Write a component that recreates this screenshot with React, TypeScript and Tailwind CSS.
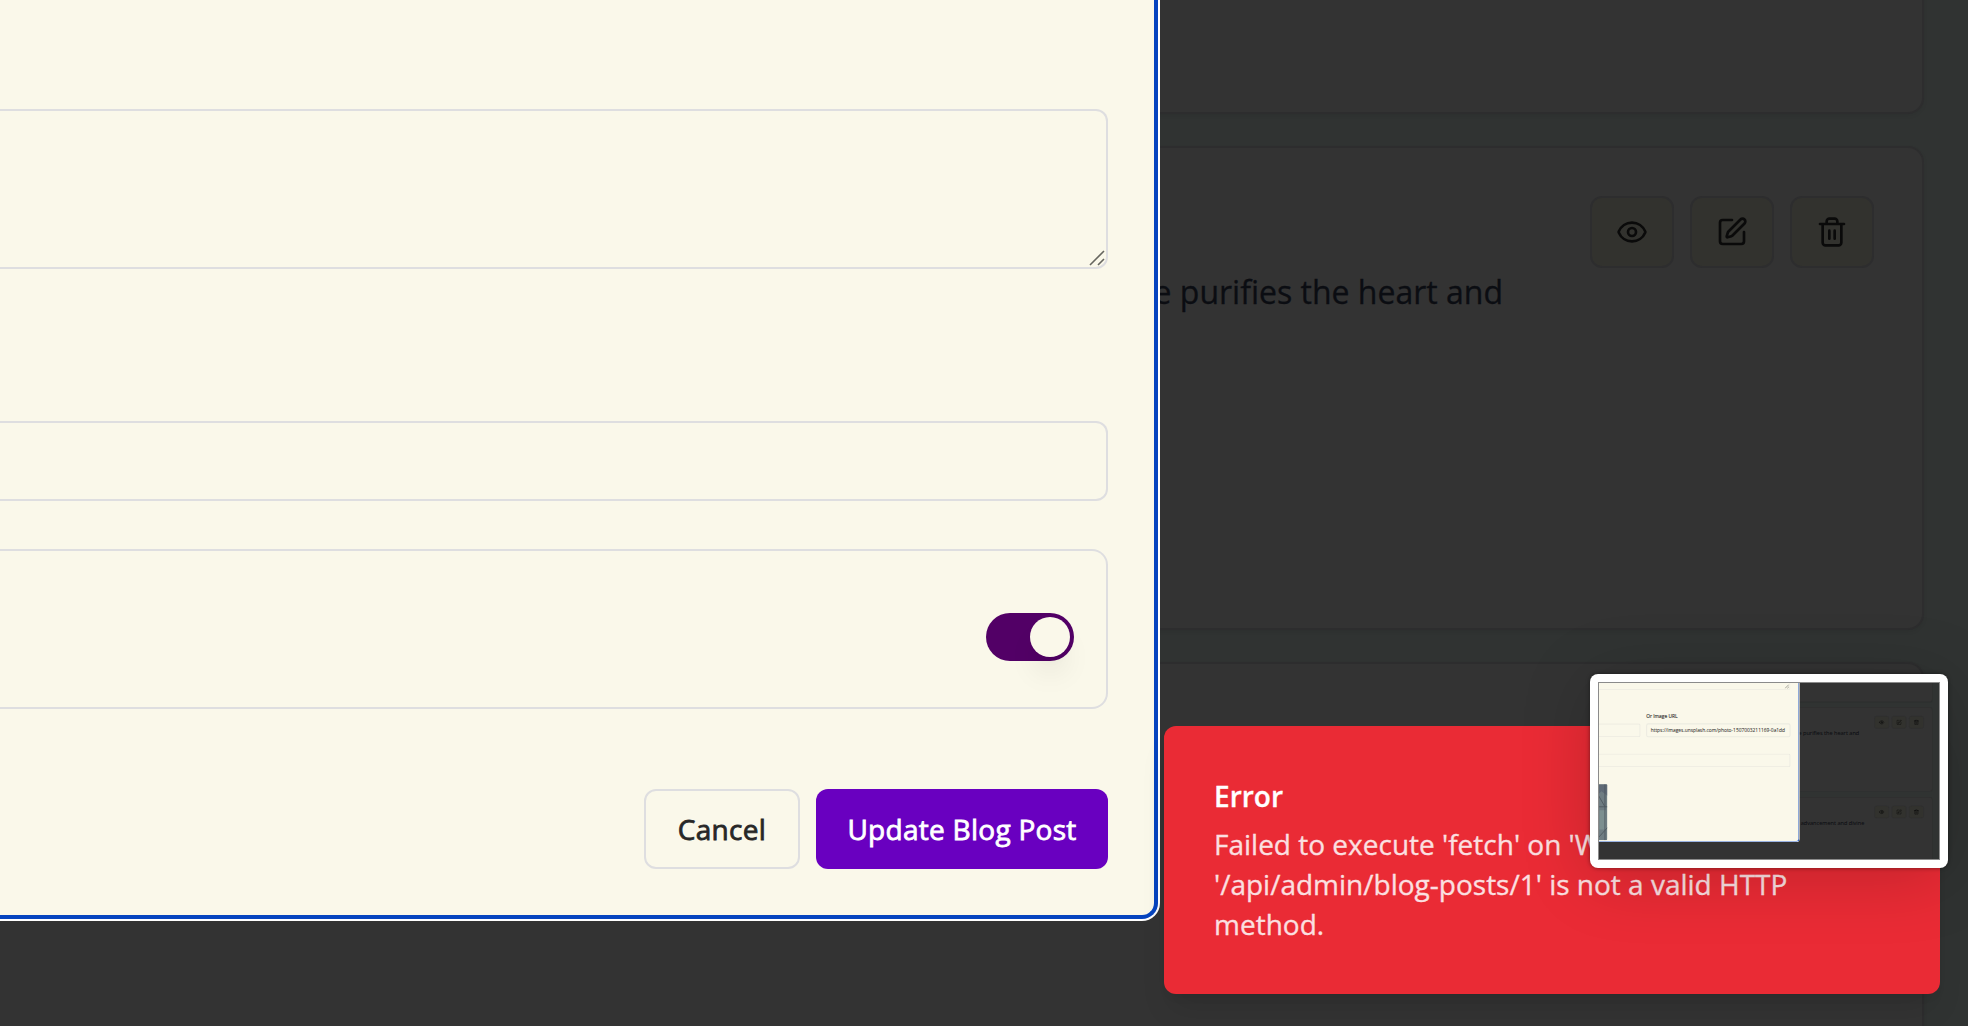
import React from "react";
import { Eye, SquarePen } from "lucide-react";

function TrashIcon() {
  return (
    <svg width="32" height="32" viewBox="0 0 24 24" fill="none" stroke="currentColor" strokeWidth="2" strokeLinecap="round" strokeLinejoin="round">
      <path d="M3 6h18M19 6v14c0 1-1 2-2 2H7c-1 0-2-1-2-2V6M8 6V4c0-1 1-2 2-2h4c1 0 2 1 2 2v2M10 11v6M14 11v6" />
    </svg>
  );
}

function IconButton({ children }: { children: React.ReactNode }) {
  return (
    <button className="flex h-[72px] w-[84px] items-center justify-center rounded-xl border-2 border-[#2d2d2e] bg-[#32322e] text-[#0a0a0a]">
      {children}
    </button>
  );
}

function PostCard({ text, children }: { text?: string; children?: React.ReactNode }) {
  return (
    <article className="h-[484px] shrink-0 rounded-r-2xl border-2 border-l-0 border-[#2d2d2e] bg-[#333333] pt-12 pr-12 shadow-[0_2px_4px_rgba(0,0,0,0.06)]">
      <div className="flex items-start justify-end">
        {text && (
          <p className="mt-[72px] whitespace-nowrap text-[32px] leading-[48px] text-[#0b0d12] [-webkit-text-stroke:0.3px_#0b0d12]">{text}</p>
        )}
        {children}
        <div className="flex gap-4">
          <IconButton><Eye size={32} /></IconButton>
          <IconButton><SquarePen size={32} /></IconButton>
          <IconButton><TrashIcon /></IconButton>
        </div>
      </div>
    </article>
  );
}

function Page({ nextText, children }: { nextText?: string; children: React.ReactNode }) {
  return (
    <div className="relative h-[1026px] w-[1968px] overflow-hidden bg-[#303332]">
      <div className="-mt-[370px] flex flex-col gap-8 pr-11">
        <PostCard />
        <PostCard text="e purifies the heart and">
          <div className="w-[87px]" />
        </PostCard>
        <PostCard text={nextText}>
          <div className="w-[58px]" />
        </PostCard>
      </div>
      <div className="absolute left-0 top-0 h-[921px] w-[1160px] overflow-hidden rounded-br-[18px] bg-white pb-0.5 pr-0.5">
        <div className="h-full w-full overflow-hidden rounded-br-2xl border-b-4 border-r-4 border-[#0644bf] bg-[#faf8ea] pr-[46px]">
          {children}
        </div>
      </div>
    </div>
  );
}

function ResizeGrip() {
  return (
    <svg width="16" height="16" viewBox="0 0 16 16" stroke="#66665f" strokeWidth="1.6" fill="none">
      <path d="M1 15 15 1M9 15l6-6" />
    </svg>
  );
}

function FormBody() {
  return (
    <form className="flex flex-col">
      <div className="mt-[109px] flex h-40 items-end justify-end rounded-r-xl border-2 border-l-0 border-[#dedee0] pb-px pr-px">
        <ResizeGrip />
      </div>
      <div className="mt-[152px] h-20 rounded-r-xl border-2 border-l-0 border-[#dedee0]" />
      <div className="mt-12 flex h-40 items-center justify-end rounded-r-2xl border-2 border-l-0 border-[#dedee0] pr-8 pt-4">
        <div className="flex h-12 w-[88px] items-center justify-end rounded-full bg-[#520066] px-1">
          <div className="h-10 w-10 rounded-full bg-[#faf8ea] shadow-[0_20px_30px_-6px_rgba(0,0,0,0.1),0_8px_12px_-8px_rgba(0,0,0,0.08)]" />
        </div>
      </div>
      <div className="mt-20 flex justify-end gap-4 text-[28px] font-medium tracking-[0.28px]">
        <button type="button" className="h-20 w-[156px] whitespace-nowrap rounded-xl border-2 border-[#dedee0] text-[#272727] [-webkit-text-stroke:0.8px_#272727]">Cancel</button>
        <button type="button" className="h-20 w-[292px] whitespace-nowrap rounded-xl bg-[#6900c0] text-white [-webkit-text-stroke:0.8px_#ffffff]">Update Blog Post</button>
      </div>
    </form>
  );
}

function ImageFormBody() {
  return (
    <div className="flex flex-col text-[28px] text-[#3a3a38] [-webkit-text-stroke:0.4px_#3a3a38]">
      <div className="flex h-[47px] items-end justify-end rounded-br-xl border-b-[6px] border-r-[6px] border-[#ecebe1] pb-0.5 pr-0.5">
        <svg width="26" height="26" viewBox="0 0 16 16" stroke="#66665f" strokeWidth="2" fill="none">
          <path d="M1 15 15 1M9 15l6-6" />
        </svg>
      </div>
      <div className="mt-[129px] flex gap-8">
        <div className="mt-[62px] h-20 w-[245px] rounded-r-xl border-[6px] border-l-0 border-[#ecebe1]" />
        <div className="min-w-0 flex-1">
          <div className="h-[62px] font-medium [-webkit-text-stroke:0.8px_#3a3a38]">Or Image URL</div>
          <div className="flex h-20 items-center whitespace-nowrap rounded-xl border-[6px] border-[#ecebe1] pl-5">
            https://images.unsplash.com/photo-1507003211169-0a1dd
          </div>
        </div>
      </div>
      <div className="mt-[93px] h-20 rounded-r-xl border-[6px] border-l-0 border-[#ecebe1]" />
      <svg className="mt-[97px]" width="54" height="322" viewBox="0 0 54 322">
        <path d="M0 0h48q6 0 6 6v310q0 6-6 6H0z" fill="#6f7d82" />
        <path d="M0 0h48q6 0 6 6v60L20 40 0 60z" fill="#5f6a76" />
        <path d="M8 150h38v110H8z" fill="#7c8f8f" />
        <path d="M0 130h54M40 0v322M0 60l40 70M54 250 0 310" stroke="#4d585f" strokeWidth="5" fill="none" />
      </svg>
    </div>
  );
}

function ScreenshotThumbnail() {
  return (
    <div className="absolute left-[1590px] top-[674px] h-[194px] w-[358px] rounded-lg bg-white p-2 shadow-[0_0_4px_rgba(0,0,0,0.45),0_8px_70px_rgba(0,0,0,0.18)]">
      <div className="relative h-[178px] w-[342px] overflow-hidden">
        <div className="h-[1026px] w-[1968px] origin-top-left scale-[0.1738]">
          <Page nextText="advancement and divine">
            <ImageFormBody />
          </Page>
        </div>
        <div className="absolute inset-0 border border-[#8b8b8b]" />
      </div>
    </div>
  );
}

export default function App() {
  return (
    <div className="relative h-[1026px] w-[1968px] overflow-hidden font-['Open_Sans',sans-serif]">
      <Page>
        <FormBody />
      </Page>
      <div role="alert" className="absolute left-[1164px] top-[726px] h-[268px] w-[776px] rounded-xl bg-[#ea2b35] p-[50px] text-[28px] leading-10 text-white shadow-[0_20px_30px_-6px_rgba(0,0,0,0.1),0_8px_12px_-8px_rgba(0,0,0,0.1)]">
        <div className="font-semibold [-webkit-text-stroke:0.3px_#ffffff]">Error</div>
        <div className="mt-2 w-[640px] opacity-85 [-webkit-text-stroke:0.3px_#ffffff]">
          Failed to execute 'fetch' on 'Window': '/api/admin/blog-posts/1' is not a valid HTTP method.
        </div>
      </div>
      <ScreenshotThumbnail />
    </div>
  );
}
